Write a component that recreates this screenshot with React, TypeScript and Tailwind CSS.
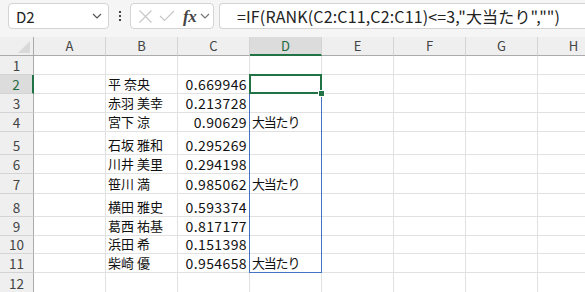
import React from 'react';

const COLS = ['A', 'B', 'C', 'D', 'E', 'F', 'G', 'H'];

type Row = { n: number; h: string; name?: string; val?: string; hit?: boolean };

const ROWS: Row[] = [
  { n: 1, h: 'h-[19px]' },
  { n: 2, h: 'h-[19px]', name: '平 奈央', val: '0.669946' },
  { n: 3, h: 'h-[19px]', name: '赤羽 美幸', val: '0.213728' },
  { n: 4, h: 'h-[19px]', name: '宮下 涼', val: '0.90629', hit: true },
  { n: 5, h: 'h-[23px]', name: '石坂 雅和', val: '0.295269' },
  { n: 6, h: 'h-[19px]', name: '川井 美里', val: '0.294198' },
  { n: 7, h: 'h-[20px]', name: '笹川 満', val: '0.985062', hit: true },
  { n: 8, h: 'h-[23px]', name: '横田 雅史', val: '0.593374' },
  { n: 9, h: 'h-[19px]', name: '葛西 祐基', val: '0.817177' },
  { n: 10, h: 'h-[18px]', name: '浜田 希', val: '0.151398' },
  { n: 11, h: 'h-[19px]', name: '柴崎 優', val: '0.954658', hit: true },
  { n: 12, h: 'h-[20px]' },
];

const font = "font-['Noto_Sans_CJK_JP',sans-serif]";

function Chevron({ className }: { className?: string }) {
  return (
    <svg width="10" height="6" viewBox="0 0 10 6" className={className}>
      <path d="M1 1l4 4 4-4" fill="none" stroke="currentColor" strokeWidth="1.2" />
    </svg>
  );
}

function FormulaBar() {
  return (
    <div className="h-[37px] flex items-start pt-[3px] pl-[8px] bg-[#f5f5f5]">
      {/* name box */}
      <div className="w-[101px] h-[26px] rounded-[4px] border border-[#d4d4d4] bg-white flex items-center justify-between pl-[7px] pr-[6px]">
        <span className="text-[15px] text-[#222] leading-none">D2</span>
        <Chevron className="text-[#555]" />
      </div>
      <div className="w-[21px] h-[26px] flex flex-col items-center justify-center gap-[2px]">
        <span className="w-[2px] h-[2px] bg-[#444]" />
        <span className="w-[2px] h-[2px] bg-[#444]" />
        <span className="w-[2px] h-[2px] bg-[#444]" />
      </div>
      {/* fx box */}
      <div className="w-[84px] h-[26px] rounded-[4px] border border-[#d4d4d4] bg-white flex items-center pl-[7px]">
        <svg width="15" height="15" viewBox="0 0 15 15" className="text-[#c6c6c6]">
          <path d="M1.5 1.5l12 12M13.5 1.5l-12 12" stroke="currentColor" strokeWidth="1.1" />
        </svg>
        <svg width="16" height="12" viewBox="0 0 16 12" className="ml-[6px] text-[#c6c6c6]">
          <path d="M1 6l4.5 4.5L15 1" fill="none" stroke="currentColor" strokeWidth="1.1" />
        </svg>
        <span className="ml-[8px] font-['Liberation_Serif',serif] italic font-bold text-[17px] leading-none text-[#444] tracking-[-0.5px]">fx</span>
        <Chevron className="ml-[4px] text-[#777]" />
      </div>
      <div className="ml-[5px] flex-1 h-[26px] rounded-l-[4px] border border-r-0 border-[#d4d4d4] bg-white flex items-center pl-[17px] whitespace-nowrap overflow-hidden">
        <span className="text-[16px] text-[#222] leading-none tracking-[0.15px]">=IF(RANK(C2:C11,C2:C11)&lt;=3,"大当たり","")</span>
      </div>
    </div>
  );
}

function HeaderRow() {
  return (
    <div className="h-[19px] flex bg-[#efefef]">
      <div className="w-[34px] shrink-0 border-r border-b border-[#ababab] relative">
        <svg width="12" height="12" viewBox="0 0 12 12" className="absolute right-[3px] bottom-[2px]">
          <path d="M12 0V12H0Z" fill="#d9d9d9" />
        </svg>
      </div>
      {COLS.map((c) =>
        c === 'D' ? (
          <div
            key={c}
            className="w-[72px] shrink-0 flex items-end justify-center border-r border-[#d4d4d4] border-b-2 border-b-[#217346] bg-[#dcdcdc] text-[13px] leading-[17px] text-[#1e6b41]"
          >
            {c}
          </div>
        ) : (
          <div
            key={c}
            className="w-[72px] shrink-0 flex items-end justify-center border-r border-[#d4d4d4] border-b border-b-[#ababab] text-[13px] leading-[18px] text-[#444]"
          >
            {c}
          </div>
        )
      )}
    </div>
  );
}

function DataRow({ r }: { r: Row }) {
  const sel = r.n === 2;
  return (
    <div className={`flex ${r.h}`}>
      <div
        className={`w-[34px] shrink-0 flex items-end justify-center border-b border-[#d4d4d4] text-[13.5px] leading-[16px] pb-[1px] ${
          sel ? 'bg-[#dcdcdc] text-[#1e6b41] border-r-2 border-r-[#217346]' : 'bg-[#efefef] text-[#444] border-r border-r-[#ababab]'
        }`}
      >
        {r.n}
      </div>
      {COLS.map((c) => (
        <div
          key={c}
          className={`w-[72px] shrink-0 flex items-end border-r border-b border-[#e1e1e1] leading-[16px] pb-[1px] text-[#111] whitespace-nowrap ${
            c === 'C' ? 'justify-end pr-[2px] text-[14px] tracking-[0.4px]' : 'pl-[2px] text-[13px]'
          }`}
        >
          {c === 'B' && r.name}
          {c === 'C' && r.val}
          {c === 'D' && r.hit && <span className="tracking-[-1.2px]">大当たり</span>}
        </div>
      ))}
    </div>
  );
}

export default function App() {
  return (
    <div className={`relative w-[585px] h-[292px] overflow-hidden bg-white ${font}`}>
      <FormulaBar />
      <HeaderRow />
      {ROWS.map((r) => (
        <DataRow key={r.n} r={r} />
      ))}
      {/* range outline D3:D11 */}
      <div className="absolute left-[249px] top-[94px] w-[73px] h-[179px] border border-t-0 border-[#4472c4] pointer-events-none" />
      {/* active cell D2 */}
      <div className="absolute left-[249px] top-[74px] w-[73px] h-[20px] border-2 border-[#217346] pointer-events-none" />
      <div className="absolute left-[318px] top-[90px] w-[7px] h-[7px] bg-[#217346] border border-white pointer-events-none" />
    </div>
  );
}
